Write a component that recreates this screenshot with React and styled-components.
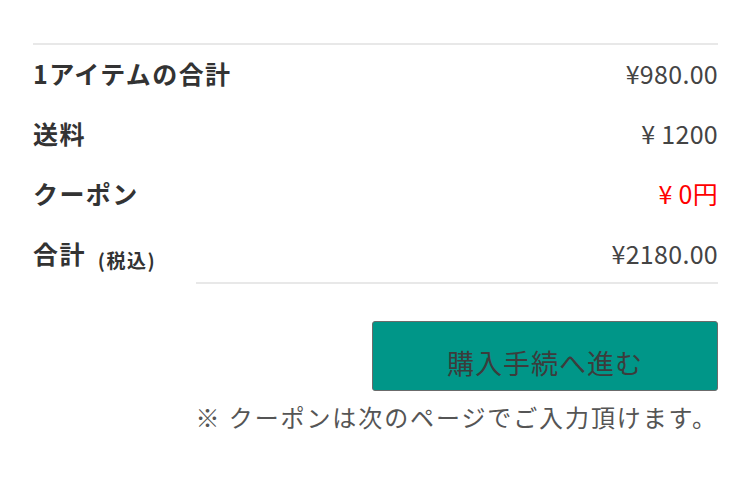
import React from 'react';
import styled, { createGlobalStyle } from 'styled-components';

const GlobalStyle = createGlobalStyle`
  body {
    margin: 0;
    background: #fff;
    font-family: "Noto Sans CJK JP", "Noto Sans", sans-serif;
    color: #333;
  }
`

const Wrapper = styled.div`
  width: 685px;
  margin-left: 33px;
  padding-top: 43px;
`

const SummaryList = styled.dl`
  margin: 0;
  border-top: 2px solid #e8e8e8;
`

const Row = styled.div`
  display: flex;
  justify-content: space-between;
  align-items: center;
  height: 60px;
  padding-bottom: 4px;
  box-sizing: border-box;
  line-height: 1;

  &:last-child {
    height: 57px;
    padding-bottom: 1px;
  }
`

const Label = styled.dt`
  font-size: 25px;
  font-weight: bold;
  letter-spacing: 1.4px;
  color: #333;
`

const Small = styled.small`
  font-size: 19px;
  margin-left: 12px;
  letter-spacing: 1.5px;
  position: relative;
  top: 4px;
`

const Value = styled.dd`
  margin: 0;
  font-size: 25px;
  letter-spacing: 0.3px;
  color: ${({ highlight }) => (highlight ? '#ff0000' : '#444')};
`

const Divider = styled.hr`
  margin: 0 0 37px 163px;
  border: 0;
  border-top: 2px solid #e8e8e8;
`

const Actions = styled.div`
  display: flex;
  flex-direction: column;
  align-items: flex-end;
`

const CheckoutButton = styled.button`
  width: 346px;
  height: 70px;
  padding: 12px 0 0;
  background: #009688;
  border: 1px solid #6b6b6b;
  border-radius: 3px;
  font-family: inherit;
  font-size: 27px;
  letter-spacing: 1px;
  color: #3c3c3c;
  cursor: pointer;
`

const Note = styled.p`
  margin: 12px 0 0 0;
  font-size: 24px;
  line-height: 1.2;
  letter-spacing: 1.9px;
  color: #555;
`

const ROWS = [
  { label: '1アイテムの合計', value: '¥980.00' },
  { label: '送料', value: '¥ 1200' },
  { label: 'クーポン', value: '¥ 0円', highlight: true },
  { label: '合計', note: '(税込)', value: '¥2180.00' },
]

const App = () => {
  return <Wrapper>
    <GlobalStyle />
    <SummaryList>
      {ROWS.map(({ label, note, value, highlight }) => (
        <Row key={label}>
          <Label>{label}{note && <Small>{note}</Small>}</Label>
          <Value highlight={highlight}>{value}</Value>
        </Row>
      ))}
    </SummaryList>
    <Divider />
    <Actions>
      <CheckoutButton>購入手続へ進む</CheckoutButton>
      <Note>※ クーポンは次のページでご入力頂けます。</Note>
    </Actions>
  </Wrapper>;
};

export default App;
